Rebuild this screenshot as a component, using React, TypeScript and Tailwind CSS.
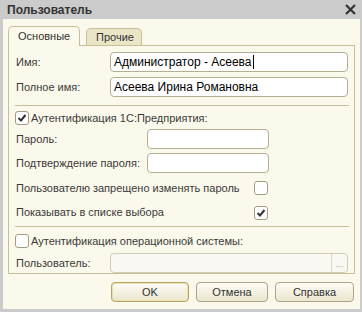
import React from "react";

const Check = ({ checked, className = "" }: { checked?: boolean; className?: string }) => (
  <div className={`w-[14px] h-[14px] rounded-[3px] border border-[#a39d80] bg-white flex items-center justify-center shrink-0 ${className}`}>
    {checked && (
      <svg width="10" height="10" viewBox="0 0 10 10">
        <path d="M1.5 5 L4 7.5 L8.5 2" fill="none" stroke="#333" strokeWidth="2" />
      </svg>
    )}
  </div>
);

const Input = ({ value, className = "", cursor }: { value?: string; className?: string; cursor?: boolean }) => (
  <div className={`h-[20px] rounded-[4px] border border-[#b4ae92] bg-white flex items-center px-[3px] text-[12px] text-black shrink-0 ${className}`}>
    <span>{value}</span>
    {cursor && <span className="w-px h-[14px] bg-black ml-[1px]" />}
  </div>
);

const Btn = ({ label, def, className = "" }: { label: string; def?: boolean; className?: string }) => (
  <div
    className={`h-[20px] rounded-[4px] border ${def ? "border-[#b9a66a] shadow-[inset_0_0_0_1px_#eadfae]" : "border-[#aaa48a]"} bg-gradient-to-b from-[#fdfcf6] to-[#ebe6cf] flex items-center justify-center text-[11px] text-[#333] ${className}`}
  >
    {label}
  </div>
);

export default function App() {
  return (
    <div className="w-[362px] h-[312px] bg-[#cbcbcb] flex flex-col text-[#3a3a3a]" style={{ fontFamily: '"Liberation Sans", Arial, sans-serif' }}>
      <div className="h-[19px] flex items-center justify-between pl-[7px] pr-[6px] shrink-0">
        <span className="font-bold text-[12px] text-[#333]">Пользователь</span>
        <svg width="11" height="11" viewBox="0 0 11 11">
          <path d="M1 1 L10 10 M10 1 L1 10" stroke="#333" strokeWidth="2.2" />
        </svg>
      </div>
      <div className="ml-[3px] mb-[3px] mr-[2px] flex-1 bg-[#fbf9eb] flex flex-col px-[5px]">
        <div className="flex items-end h-[26px] gap-[6px] relative z-10">
          <div className="w-[72px] h-[20px] bg-[#fbf9eb] border border-b-0 border-[#c7bf95] rounded-t-[5px] flex items-center pl-[9px] text-[11px] text-[#333] mb-[-1px] relative">
            Основные
          </div>
          <div className="w-[56px] h-[17px] bg-[#ebe5c8] border border-b-0 border-[#c7bf95] rounded-t-[5px] flex items-center pl-[9px] text-[11px] text-[#333]">
            Прочие
          </div>
        </div>
        <div className="w-[347px] h-[229px] border border-[#c7bf95] flex flex-col px-[6px] pt-[6px] text-[11px]">
          <div className="flex items-center h-[20px]">
            <span className="w-[95px] pl-[1px]">Имя:</span>
            <Input value="Администратор - Асеева" cursor className="w-[238px]" />
          </div>
          <div className="flex items-center h-[20px] mt-[5px]">
            <span className="w-[95px] pl-[1px]">Полное имя:</span>
            <Input value="Асеева Ирина Романовна" className="w-[238px]" />
          </div>
          <div className="h-px bg-[#c7bf95] mt-[8px] mr-[-1px]" />
          <div className="flex items-center h-[16px] mt-[4px] gap-[2px]">
            <Check checked />
            <span>Аутентификация 1С:Предприятия:</span>
          </div>
          <div className="flex items-center h-[20px] mt-[3px]">
            <span className="w-[132px] pl-[1px] whitespace-nowrap">Пароль:</span>
            <Input className="w-[122px]" />
          </div>
          <div className="flex items-center h-[20px] mt-[4px]">
            <span className="w-[132px] pl-[1px] whitespace-nowrap">Подтверждение пароля:</span>
            <Input className="w-[122px]" />
          </div>
          <div className="flex items-center h-[20px] mt-[6px]">
            <span className="w-[239px] pl-[1px] whitespace-nowrap">Пользователю запрещено изменять пароль</span>
            <Check />
          </div>
          <div className="flex items-center h-[20px] mt-[5px]">
            <span className="w-[239px] pl-[1px] whitespace-nowrap">Показывать в списке выбора</span>
            <Check checked />
          </div>
          <div className="h-px bg-[#c7bf95] mt-[4px] mr-[-1px]" />
          <div className="flex items-center h-[16px] mt-[6px] gap-[2px]">
            <Check />
            <span>Аутентификация операционной системы:</span>
          </div>
          <div className="flex items-center h-[20px] mt-[4px]">
            <span className="w-[95px] pl-[1px]">Пользователь:</span>
            <div className="w-[238px] h-[20px] rounded-[4px] border border-[#d2cdb6] bg-[#f9f8f2] flex justify-end">
              <div className="w-[16px] h-full border-l border-[#dcd8c4] flex items-end justify-center pb-[3px] text-[9px] text-[#a9a48c] leading-none">...</div>
            </div>
          </div>
        </div>
        <div className="flex justify-end gap-[7px] mt-[8px] pr-[1px]">
          <Btn label="OK" def className="w-[78px]" />
          <Btn label="Отмена" className="w-[72px]" />
          <Btn label="Справка" className="w-[79px]" />
        </div>
      </div>
    </div>
  );
}
